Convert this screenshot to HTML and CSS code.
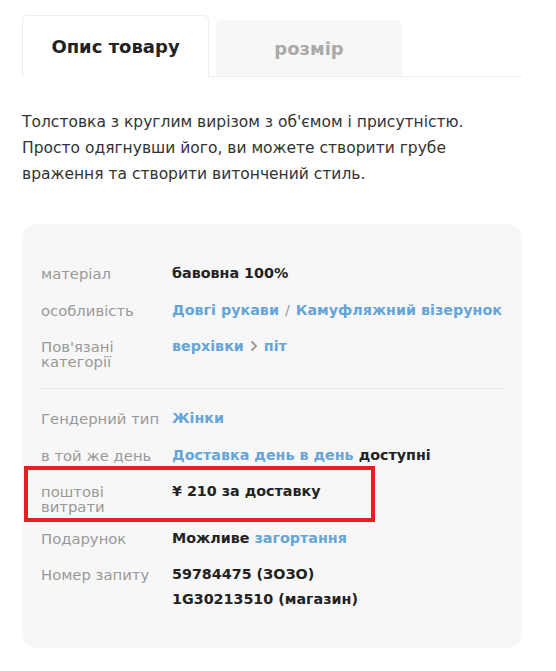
FILE: index.html
```html
<!DOCTYPE html>
<html lang="uk">
<head>
    <meta charset="UTF-8">
    <meta name="viewport" content="width=device-width, initial-scale=1.0">
    <title>Опис товару</title>
    <link rel="stylesheet" href="styles.css">
</head>
<body>
    <div class="product">
        <!-- вкладки -->
        <div class="tabs">
            <div class="tab active">Опис товару</div>
            <div class="tab">розмір</div>
        </div>

        <p class="description">
            Толстовка з круглим вирізом з об'ємом і присутністю.<br>
            Просто одягнувши його, ви можете створити грубе<br>
            враження та створити витончений стиль.
        </p>

        <!-- характеристики -->
        <div class="specs">
            <div class="row">
                <div class="label">матеріал</div>
                <div class="value">бавовна 100%</div>
            </div>
            <div class="row">
                <div class="label">особливість</div>
                <div class="value"><a href="#">Довгі рукави</a> <span class="sep">/</span> <a href="#">Камуфляжний візерунок</a></div>
            </div>
            <div class="row">
                <div class="label">Пов'язані<br>категорії</div>
                <div class="value">
                    <a href="#">верхівки</a>
                    <svg class="chevron" width="8" height="12" viewBox="0 0 8 12"><polyline points="1.5,1.5 6,6 1.5,10.5" fill="none" stroke="#a49a92" stroke-width="2"/></svg>
                    <a href="#">піт</a>
                </div>
            </div>

            <hr class="divider">

            <div class="row">
                <div class="label">Гендерний тип</div>
                <div class="value"><a href="#">Жінки</a></div>
            </div>
            <div class="row">
                <div class="label">в той же день</div>
                <div class="value"><a href="#">Доставка день в день</a> доступні</div>
            </div>
            <div class="row highlight">
                <div class="label">поштові<br>витрати</div>
                <div class="value">¥ 210 за доставку</div>
            </div>
            <div class="row">
                <div class="label">Подарунок</div>
                <div class="value">Можливе <a href="#">загортання</a></div>
            </div>
            <div class="row">
                <div class="label">Номер запиту</div>
                <div class="value">59784475 (ЗОЗО)<br>1G30213510 (магазин)</div>
            </div>
        </div>
    </div>
</body>
</html>
```

FILE: styles.css
```css
body {
    font-family: "DejaVu Sans", Verdana, sans-serif;
    background-color: #fff;
    margin: 0;
    padding: 15px 0 0 22px;
    color: #222;
}

.product {
    width: 500px;
}

.tabs {
    display: flex;
    align-items: flex-end;
    gap: 7px;
    border-bottom: 1px solid #eee;
}

.tab {
    width: 186px;
    height: 56px;
    display: flex;
    align-items: center;
    justify-content: center;
    background-color: #f7f7f7;
    border-radius: 5px 5px 0 0;
    font-size: 18px;
    font-weight: bold;
    color: #aaa;
}

.tab.active {
    width: 185px;
    height: 61px;
    margin-bottom: -1px;
    background-color: #fff;
    border: 1px solid #eee;
    border-bottom: none;
    color: #222;
}

.description {
    margin: 32px 0 37px;
    font-size: 15.5px;
    line-height: 26px;
    color: #333;
}

.specs {
    background-color: #f7f7f7;
    border-radius: 14px;
    padding: 37px 15px 36px 19px;
}

.row {
    position: relative;
    display: flex;
    align-items: flex-start;
    margin-bottom: 11.5px;
}

.row:last-child {
    margin-bottom: 0;
}

.label {
    width: 131px;
    flex-shrink: 0;
    padding-top: 5px;
    font-size: 14.8px;
    line-height: 15px;
    color: #999;
}

.value {
    font-size: 14.3px;
    line-height: 25px;
    font-weight: bold;
    color: #222;
    white-space: nowrap;
}

.value a {
    color: #65a5d8;
    text-decoration: none;
}

.sep {
    color: #999;
    font-weight: normal;
    margin: 0 1px;
}

.chevron {
    margin: 0 1px;
    vertical-align: -1px;
}

.divider {
    border: none;
    border-top: 1px solid #e6e6e6;
    margin: 19px 4px 17px 0;
}

.highlight::before {
    content: "";
    position: absolute;
    top: -13px;
    bottom: -8px;
    left: -17px;
    width: 343px;
    border: 4px solid #ec1c24;
}
```
